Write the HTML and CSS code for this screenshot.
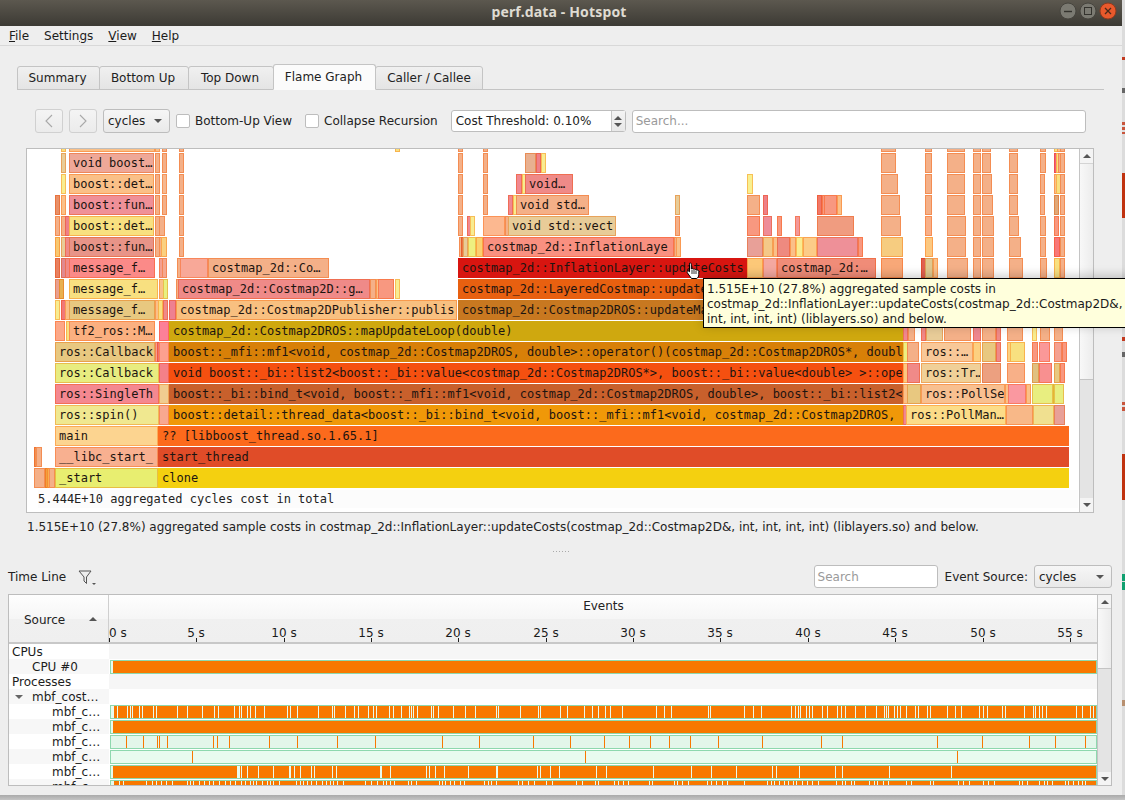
FILE: index.html
```html
<!DOCTYPE html>
<html lang="en">
<head>
<meta charset="utf-8">
<title>perf.data - Hotspot</title>
<link rel="stylesheet" href="styles.css">
</head>
<body>
<div class="top">
  <div class="window">
    <header class="titlebar">
      <span class="title">perf.data - Hotspot</span>
      <div class="winbtns">
        <svg width="60" height="18" viewBox="0 0 60 18">
          <circle cx="9" cy="9" r="8" fill="#7b7a72" stroke="#46443e"/>
          <path d="M5 9.5h8" stroke="#33322d" stroke-width="1.4"/>
          <circle cx="29" cy="9" r="8" fill="#7b7a72" stroke="#46443e"/>
          <rect x="25.5" y="5.5" width="7" height="7" fill="none" stroke="#33322d"/>
          <circle cx="49" cy="9" r="8" fill="#e9592c" stroke="#8e3a1e"/>
          <path d="M46 6l6 6M52 6l-6 6" stroke="#4a2a1a" stroke-width="1.3"/>
        </svg>
      </div>
    </header>
    <nav class="menubar">
      <span><u>F</u>ile</span>
      <span>Settin<u>g</u>s</span>
      <span><u>V</u>iew</span>
      <span><u>H</u>elp</span>
    </nav>
    <main class="content">
      <div class="tabs">
        <span class="tab">Summary</span>
        <span class="tab tab-w2">Bottom Up</span>
        <span class="tab tab-w3">Top Down</span>
        <span class="tab tab-on">Flame Graph</span>
        <span class="tab tab-w5">Caller / Callee</span>
      </div>
      <div class="toolbar">
        <button class="navbtn" aria-label="Back"><svg width="10" height="16" viewBox="0 0 10 16"><path d="M8 2L2 8l6 6" fill="none" stroke="#a8a8a8" stroke-width="1.1"/></svg></button>
        <button class="navbtn" aria-label="Forward"><svg width="10" height="16" viewBox="0 0 10 16"><path d="M2 2l6 6-6 6" fill="none" stroke="#a8a8a8" stroke-width="1.1"/></svg></button>
        <div class="combo combo-cycles"><span>cycles</span><i class="arrow-down"></i></div>
        <label class="check"><i class="box"></i>Bottom-Up View</label>
        <label class="check check-2"><i class="box"></i>Collapse Recursion</label>
        <div class="spin">
          <span class="spin-text">Cost Threshold: 0.10%</span>
          <span class="spin-btns"><i class="arrow-up"></i><i class="arrow-down"></i></span>
        </div>
        <div class="field field-grow">Search...</div>
      </div>
      <section class="flame">
        <div class="scene" id="scene">
          <div class="total">5.444E+10 aggregated cycles cost in total</div>
        </div>
        <div class="vscroll vscroll-flame">
          <span class="sb-btn"><i class="arrow-up"></i></span>
          <span class="sb-handle"></span>
          <span class="sb-track"></span>
          <span class="sb-btn"><i class="arrow-down"></i></span>
        </div>
      </section>
      <p class="status">1.515E+10 (27.8%) aggregated sample costs in costmap_2d::InflationLayer::updateCosts(costmap_2d::Costmap2D&amp;, int, int, int, int) (liblayers.so) and below.</p>
      <div class="splitter"></div>
      <div class="tl-head">
        <span class="tl-title">Time Line</span>
        <svg class="filter" width="18" height="16" viewBox="0 0 18 16"><path d="M1 1h12L8.500 7v6.500L6 11V7z" fill="none" stroke="#555" stroke-width="1"/><path d="M14 13h4l-2 2z" fill="#555"/></svg>
        <span class="spacer"></span>
        <div class="field field-search">Search</div>
        <span class="tl-label">Event Source:</span>
        <div class="combo combo-source"><span>cycles</span><i class="arrow-down"></i></div>
      </div>
      <section class="timeline">
        <div class="tl-main">
          <div class="tl-header">
            <div class="hd-source"><span>Source</span><i class="arrow-up"></i></div>
            <div class="hd-events">
              <span class="hd-title">Events</span>
              <div class="ruler" id="ruler"></div>
            </div>
          </div>
          <div class="tl-rows" id="rows"></div>
        </div>
        <div class="vscroll vscroll-tl">
          <span class="sb-btn"><i class="arrow-up"></i></span>
          <span class="sb-handle"></span>
          <span class="sb-track"></span>
          <span class="sb-btn"><i class="arrow-down"></i></span>
        </div>
      </section>
    </main>
  </div>
  <div class="desktop"></div>
</div>
<div class="shadow"></div>
<svg class="hand" width="15" height="18" viewBox="0 0 15 18"><path d="M3.500 1.200c.8-.7 1.800 0 1.800 1V7l.4-.2c.7-.3 1.400 0 1.600.4.7-.4 1.500-.2 1.800.4.7-.3 1.500 0 1.700.6l.8-.1c.7 0 1.200.6 1.200 1.300v3.400c0 1.800-1 3-2 3.700H5.500L1.500 11c-.6-.8-.5-1.600.1-1.900.6-.3 1.300 0 1.900.7V2.200z" fill="#fff" stroke="#000" stroke-width="1"/><path d="M6 8v4M8 8v4M10 8.500V12" stroke="#000" stroke-width=".8"/></svg>
<div class="tooltip">1.515E+10 (27.8%) aggregated sample costs in<br>costmap_2d::InflationLayer::updateCosts(costmap_2d::Costmap2D&amp;,<br>int, int, int, int) (liblayers.so) and below.</div>
<script src="app.js"></script>
</body>
</html>
```
FILE: styles.css
```css
* { box-sizing: border-box; }
html, body { margin: 0; height: 800px; overflow: hidden; }
body {
  position: relative;
  background: #c4c4c4;
  font: 12px/15px "DejaVu Sans", sans-serif;
  color: #222;
}
.top { display: flex; height: 795px; }
.window { width: 1122px; background: #eeeeee; display: flex; flex-direction: column; }
.desktop {
  flex: 1;
  background: linear-gradient(to bottom,
    #dcdcdc 0 57px, #c23a20 57px 60px, #dcdcdc 60px 88px, #666 88px 93px, #dcdcdc 93px 122px,
    #c8553c 122px 125px, #dcdcdc 125px 127px, #c8553c 127px 130px, #dcdcdc 130px 132px, #c8553c 132px 134px,
    #dcdcdc 134px 173px, #c0320f 173px 218px, #dcdcdc 218px 337px, #c23a20 337px 341px,
    #dcdcdc 341px 352px, #666 352px 357px, #dcdcdc 357px 402px, #c8553c 402px 405px, #dcdcdc 405px 407px,
    #c8553c 407px 411px, #dcdcdc 411px 454px, #c0320f 454px 500px, #dcdcdc 500px 574px,
    #10a070 574px 581px, #dcdcdc 581px 582px, #10a070 582px 590px, #dcdcdc 590px 700px,
    #b89070 700px 706px, #dcdcdc 706px);
}
.shadow { height: 5px; background: linear-gradient(to bottom, #aaaaaa, #c4c4c4); }

.titlebar {
  height: 26px;
  position: relative;
  flex: none;
  display: flex; align-items: center; justify-content: center;
  background: linear-gradient(to bottom, #5c584f, #3c3a34);
  padding: 0 4px 3px 0;
}
.title { font: bold 14px/20px "Noto Sans", sans-serif; letter-spacing: .15px; color: #dfdbd2; }
.winbtns { position: absolute; right: 3px; top: 2px; display: flex; }
.menubar {
  height: 20px;
  flex: none;
  display: flex;
  gap: 15px;
  padding: 2px 0 0 9px;
  border-bottom: 1px solid #d8d8d8;
  line-height: 16px;
  color: #1c1c1c;
}
.content { flex: 1; padding-left: 17px; display: flex; flex-direction: column; min-height: 0; }

.tabs {
  display: flex; align-items: flex-end;
  height: 26px; margin-top: 18px; margin-right: 18px;
  border-bottom: 1px solid #c4c4c4;
}
.tab {
  width: 83px; height: 24px; margin-bottom: -1px; padding-right: 2px;
  display: flex; align-items: center; justify-content: center;
  border: 1px solid #c4c4c4; border-radius: 3px 3px 0 0;
  background: linear-gradient(to bottom, #f0f0f0, #e4e4e4);
  margin-right: -1px;
}
.tab-w2 { width: 90px; }
.tab-w3 { width: 86px; }
.tab-on { width: 103px; height: 26px; background: #fbfbfb; border-bottom-color: #fbfbfb; z-index: 1; }
.tab-w5 { width: 108px; padding-right: 0; }

.toolbar { display: flex; align-items: center; height: 24px; margin: 19px 0 0 18px; width: 1051px; }
.navbtn {
  width: 28px; height: 24px; margin: 0 6px 0 0; padding: 0;
  display: flex; align-items: center; justify-content: center;
  border: 1px solid #d0d0d0; border-radius: 3px;
  background: linear-gradient(to bottom, #f4f4f4, #ebebeb);
}
.combo {
  display: flex; align-items: center; justify-content: space-between;
  height: 24px; padding: 0 7px 0 4px;
  border: 1px solid #bdbdbd; border-radius: 3px;
  background: linear-gradient(to bottom, #f6f6f6, #e9e9e9);
}
.combo-cycles { width: 67px; }
.arrow-down, .arrow-up { display: block; width: 0; height: 0; border-left: 4px solid transparent; border-right: 4px solid transparent; }
.arrow-down { border-top: 4px solid #555; }
.arrow-up { border-bottom: 4px solid #555; }
.check { display: flex; align-items: center; margin-left: 6px; color: #222; }
.check-2 { margin-left: 13px; }
.box { width: 14px; height: 14px; margin-right: 5px; border: 1px solid #bdbdbd; border-radius: 2px; background: #fff; }
.spin {
  width: 175px; height: 22px; margin-left: 13px;
  display: flex; align-items: center; justify-content: space-between;
  border: 1px solid #bdbdbd; border-radius: 3px; background: #fff;
  padding-left: 4px;
}
.spin-btns {
  width: 14px; height: 20px; border-left: 1px solid #c8c8c8;
  display: flex; flex-direction: column; align-items: center; justify-content: center; gap: 3px;
  background: linear-gradient(to bottom, #f4f4f4, #e8e8e8);
}
.field {
  height: 23px; padding: 0 3px;
  display: flex; align-items: center;
  border: 1px solid #bdbdbd; border-radius: 3px; background: #fff; color: #9a9a9a;
}
.field-grow { flex: 1; margin-left: 6px; }

.flame {
  display: flex;
  flex: none;
  width: 1068px; height: 365px; margin: 15px 0 0 9px;
  border: 1px solid #bdbdbd;
  background: #fff;
}
.scene { position: relative; flex: 1; overflow: hidden; background: #fff; font: 12px/18px "DejaVu Sans Mono", monospace; color: #1c1c1c; }
.block { position: absolute; height: 20px; padding-left: 3px; border: 1px solid; overflow: hidden; white-space: pre; color: #1c1410; }
.total { position: absolute; left: 11px; top: 341px; line-height: 18px; color: #222; width: 1040px; background: #fcfcfc; }

.vscroll { width: 14px; display: flex; flex-direction: column; border-left: 1px solid #c4c4c4; background: #e4e4e4; }
.sb-btn { height: 14px; flex: none; display: flex; align-items: center; justify-content: center; background: #f4f4f4; }
.sb-handle { flex: none; background: linear-gradient(to right, #f8f8f8, #ececec); border-top: 1px solid #d4d4d4; border-bottom: 1px solid #c4c4c4; }
.sb-track { flex: 1; }
.vscroll-flame .sb-handle { height: 217px; }
.vscroll-tl .sb-handle { height: 61px; }
.vscroll-tl .sb-btn { height: 13px; }

.status { margin: 7px 0 0 10px; height: 14px; line-height: 14px; white-space: nowrap; flex: none; }
.splitter {
  width: 18px; height: 1px; margin: 17px 0 0 536px; flex: none;
  background: repeating-linear-gradient(to right, #aaa 0 1px, transparent 1px 3px);
}
.tl-head { display: flex; align-items: center; height: 23px; margin: 13px 0 0 -9px; width: 1104px; flex: none; }
.tl-title { width: 70px; padding-top: 2px; }
.filter { margin-top: 2px; }
.spacer { flex: 1; }
.field-search { width: 124px; height: 23px; padding-top: 1px; }
.tl-label { margin: 0 6px 0 7px; padding-top: 1px; }
.combo-source { width: 78px; height: 23px; padding-top: 1px; }

.timeline {
  display: flex;
  flex: none;
  width: 1104px; height: 192px; margin: 6px 0 0 -9px;
  border: 1px solid #bdbdbd;
  background: #fff;
}
.tl-main { width: 1089px; display: flex; flex-direction: column; overflow: hidden; }
.tl-header { height: 49px; flex: none; display: flex; border-bottom: 2px solid #c8c8c8; background: linear-gradient(to bottom, #fefefe, #f6f6f6 50%, #f0f0f0 50%, #efefef); }
.hd-source { width: 100px; flex: none; display: flex; align-items: center; padding: 3px 11px 0 15px; justify-content: space-between; border-right: 1px solid #cfcfcf; }
.hd-source .arrow-up { margin-bottom: 3px; }
.hd-events { flex: 1; position: relative; }
.hd-title { display: block; text-align: center; padding: 4px 0 0 1px; }
.ruler { position: absolute; inset: 0; }
.tick { position: absolute; bottom: 0; width: 1px; height: 4px; background: #222; }
.tick span { position: absolute; bottom: 1px; left: -20px; width: 40px; text-align: center; color: #1a1a1a; }
.tick-first span { left: 0; text-align: left; }

.tl-rows { flex: 1; overflow: hidden; min-height: 0; }
.row { display: flex; height: 15px; flex: none; }
.row-label { width: 100px; flex: none; white-space: nowrap; background: #fff; color: #1c1c1c; padding-top: 1px; line-height: 14px; }
.row-alt .row-label { background: #f7f7f7; }
.row-0 .row-label { padding-left: 3px; }
.row-1 .row-label { padding-left: 23px; }
.row-2 .row-label { padding-left: 43px; }
.row-label .arrow-down { display: inline-block; margin: 0 9px 2px -17px; vertical-align: middle; border-top-color: #666; }
.row-empty { flex: 1; background: #f6f6f6; }
.row-blank { flex: 1; background: #fff; }
.bar { flex: 1; position: relative; margin: 1px 0 0 1px; height: 14px; border: 1px solid #8ed8ae; overflow: hidden; background: #e8faee; }
.bar-b { background: #e3f6ea; }
.bar-w { background: #e9fbef; }
.seg { position: absolute; top: 0; bottom: 0; background: #f87800; }

.tooltip {
  position: absolute; left: 703px; top: 278px; width: 430px; height: 50px;
  padding: 3px 3px;
  background: #ffffdc; border: 1px solid #000;
  box-shadow: 0 -2px 10px rgba(0,0,0,.22);
  color: #1a1a1a;
  white-space: nowrap;
}
.hand { position: absolute; left: 686px; top: 262px; }
```
FILE: app.js
```js
// Flame graph frames: [x0, x1, fill, label] per row, in page coordinates.
var P = '#f4b088', Y = '#f8e080', L = '#f8ec90', R = '#ef8a88', S = '#f89880', T = '#e8cc98', G = '#e8ee80', O = '#fac088', K = '#f4a090';
var flame = {
  '-1': [[61,63,Y],[69,155,O],[155,157,O],[162,165,P],[179,181,P],[395,399,Y],[458,460,P],[483,485,P],[881,896,P],[925,932,P],[947,965,P],[973,981,P],[982,991,P],[1009,1018,P],[1040,1046,P],[1054,1056,Y],[1057,1059,O],[1060,1062,P]],
  0: [[61,64,T],[69,154,'#eea898','void boost…'],[155,156,P],[162,165,P],[179,181,P],[458,460,P],[483,485,P],[525,536,'#e8b090'],[536,541,'#ee8088'],[541,546,L],[881,896,P],[925,932,P],[947,965,P],[973,981,P],[982,991,P],[1009,1018,P],[1040,1046,P],[1054,1056,'#f06080'],[1056,1058,Y],[1058,1060,P],[1060,1062,P]],
  1: [[61,64,L],[69,154,O,'boost::det…'],[155,156,P],[162,165,'#f6b890'],[179,181,P],[458,461,P],[483,485,P],[516,522,'#f08890'],[522,525,L],[525,573,R,'void…'],[747,753,'#f8f090'],[881,898,P],[925,932,P],[947,965,P],[973,981,P],[982,992,P],[1009,1018,P],[1040,1045,P],[1054,1056,O],[1056,1058,Y],[1060,1062,P]],
  2: [[55,57,'#e89068'],[61,64,O],[69,154,'#ef9098','boost::fun…'],[155,156,P],[162,165,P],[179,181,P],[458,460,P],[483,485,P],[508,513,'#f08890'],[513,516,L],[516,589,P,'void std…'],[675,677,T],[747,760,P],[763,766,'#ee8088'],[817,822,'#f07868'],[822,824,S],[824,837,S],[837,838,O],[881,900,P],[925,932,P],[947,965,P],[973,981,P],[982,993,P],[1009,1018,P],[1040,1045,P],[1054,1059,'#e0a878'],[1060,1062,P]],
  3: [[55,57,P],[61,63,P],[65,67,'#ee8088'],[69,154,Y,'boost::det…'],[155,156,P],[159,165,P],[179,181,P],[458,461,P],[467,470,'#f08890'],[470,472,L],[483,505,'#fcb890'],[505,508,P],[508,616,T,'void std::vect'],[675,677,P],[747,760,S],[763,772,'#ee8c98'],[777,779,S],[795,798,'#f49898'],[817,854,'#f09c80'],[881,901,P],[925,932,'#f8b088'],[947,966,P],[973,981,P],[982,994,P],[1009,1019,P],[1040,1046,P],[1054,1059,S],[1060,1062,P]],
  4: [[55,57,'#f8c870'],[61,64,T],[65,67,R],[69,154,'#e89488','boost::fun…'],[155,156,P],[159,161,P],[161,167,'#fad080'],[179,181,P],[459,461,P],[461,463,'#e87848'],[463,467,T],[468,476,'#eef080'],[476,483,'#fbd070'],[483,674,'#f99080','costmap_2d::InflationLaye'],[674,676,P],[676,678,O],[747,763,'#e8a098'],[763,773,'#f4c888'],[773,777,O],[777,790,'#ee8a80'],[790,796,O],[796,803,'#faec90'],[803,817,'#fccc88'],[817,858,'#ee9098'],[858,861,S],[881,903,'#f6cc80'],[925,933,'#fcc880'],[947,966,P],[973,981,P],[982,994,P],[1009,1021,P],[1040,1046,P],[1054,1060,'#f87878'],[1060,1062,P]],
  5: [[55,57,'#e88060'],[61,64,'#e08890'],[65,67,R],[69,155,'#fb8a88','message_f…'],[159,161,K],[162,167,'#f4a890'],[177,180,P],[180,208,'#f8a898'],[208,329,P,'costmap_2d::Co…'],[458,747,'#d81510','costmap_2d::InflationLayer::updateCosts','hot'],[747,763,'#fcc878'],[763,777,'#f4a8a0'],[777,876,'#f08c78','costmap_2d:…'],[881,903,'#f8a878'],[921,922,'#e06050'],[925,933,'#e0c890'],[933,936,O],[947,968,P],[973,981,P],[982,994,P],[1009,1023,P],[1040,1047,P],[1054,1060,Y],[1060,1062,P]],
  6: [[55,59,'#e8a090'],[59,61,'#e8b050'],[69,158,Y,'message_f…'],[159,163,O],[163,167,'#e8f080'],[176,178,P],[178,370,R,'costmap_2d::Costmap2D::g…'],[370,376,P],[376,378,O],[378,394,S],[395,399,L],[458,880,'#e86010','costmap_2d::LayeredCostmap::updateMap','hot2']],
  7: [[55,59,L],[61,65,'#f07878'],[65,67,O],[69,155,'#e8c880','message_f…'],[155,158,O],[158,162,Y],[163,167,R],[169,176,'#ee8090'],[176,457,'#f8c080','costmap_2d::Costmap2DPublisher::publis'],[458,880,'#c87820','costmap_2d::Costmap2DROS::updateMap','hot2']],
  8: [[55,65,'#fca888'],[66,69,Y],[69,155,'#fbb080','tf2_ros::M…'],[159,169,'#fc8098'],[169,903,'#cfa80f','costmap_2d::Costmap2DROS::mapUpdateLoop(double)','hot3'],[903,908,'#f08890'],[908,915,P],[921,925,'#f08888'],[926,943,T],[944,971,P],[973,981,'#ee8890'],[982,996,P],[996,999,R],[1007,1023,P],[1032,1035,L],[1040,1050,P],[1054,1063,P]],
  9: [[55,155,'#e8c880','ros::Callback'],[155,157,K],[157,159,'#f07070'],[159,169,'#fca090'],[169,903,'#d88008','boost::_mfi::mf1<void, costmap_2d::Costmap2DROS, double>::operator()(costmap_2d::Costmap2DROS*, doubl','hot3'],[903,907,'#eef080'],[907,919,P],[921,973,'#f8c898','ros::…'],[973,981,'#fcd080'],[982,996,'#e8c880'],[996,999,R],[1007,1010,'#fcd080'],[1010,1025,Y],[1032,1038,S],[1039,1050,'#fa9898'],[1054,1062,K],[1062,1064,S]],
  10: [[55,159,'#e8ec80','ros::Callback'],[159,169,'#f48088'],[169,903,'#f55010','void boost::_bi::list2<boost::_bi::value<costmap_2d::Costmap2DROS*>, boost::_bi::value<double> >::ope','hot3'],[903,907,'#fcc880'],[907,920,'#f08a88'],[921,981,'#f0d098','ros::Tr…'],[982,1001,'#eca080'],[1007,1025,'#f8b088'],[1032,1039,'#e0c080'],[1039,1052,'#f89090'],[1054,1060,'#e8c880'],[1060,1064,S]],
  11: [[55,159,'#f48890','ros::SingleTh'],[159,169,'#f0cc90'],[169,903,'#c8602c','boost::_bi::bind_t<void, boost::_mfi::mf1<void, costmap_2d::Costmap2DROS, double>, boost::_bi::list2<','hot3'],[903,907,O],[907,921,'#e8c880'],[921,1005,'#f8c090','ros::PollSe'],[1005,1008,O],[1008,1026,'#fa98a0'],[1026,1029,O],[1032,1053,G],[1053,1054,'#e0e850'],[1054,1064,G]],
  12: [[55,159,'#f0e890','ros::spin()'],[159,169,'#f8a890'],[169,903,'#f09808','boost::detail::thread_data<boost::_bi::bind_t<void, boost::_mfi::mf1<void, costmap_2d::Costmap2DROS, ','hot3'],[903,906,'#f08890'],[906,1006,'#fcdc88','ros::PollMan…'],[1006,1033,'#f8b888'],[1033,1054,'#f0e090'],[1054,1065,'#e8a098']],
  13: [[55,158,'#fcd490','main'],[158,1069,'#fc6a1c','?? [libboost_thread.so.1.65.1]','hot3']],
  14: [[34,36,'#f09050'],[36,42,P],[55,158,'#f8b090','__libc_start_'],[158,1069,'#e04c28','start_thread','hot3']],
  15: [[34,45,P],[45,47,'#f0a040'],[47,49,'#f8b050'],[49,55,P],[55,158,'#e8ee70','_start'],[158,1069,'#f4d010','clone','hot3']]
};

function edge(hex) {
  var n = parseInt(hex.slice(1), 16);
  return 'rgb(' + (n >> 16) + ',' + Math.round(((n >> 8) & 255) * 0.8) + ',' + Math.round((n & 255) * 0.6) + ')';
}

var scene = document.getElementById('scene');
Object.keys(flame).forEach(function (r) {
  flame[r].forEach(function (f) {
    var d = document.createElement('div');
    d.className = 'block';
    d.style.left = (f[0] - 27) + 'px';
    d.style.top = (153 + 21 * r - 149) + 'px';
    d.style.width = (f[1] - f[0]) + 'px';
    d.style.background = f[2];
    d.style.borderColor = f[4] ? f[2] : edge(f[2]);
    if (f[3]) d.textContent = f[3];
    scene.appendChild(d);
  });
});

// Time ruler: one tick every 5 seconds.
var ruler = document.getElementById('ruler');
for (var s = 0; s <= 55; s += 5) {
  var t = document.createElement('div');
  t.className = 'tick' + (s === 0 ? ' tick-first' : '');
  t.style.left = Math.round(s * 17.47) + 'px';
  t.innerHTML = '<span>' + s + ' s</span>';
  ruler.appendChild(t);
}

// Timeline rows.
function scale(list, base) { return list.map(function (z) { return base + z / 3; }); }

var gaps1 = [113.3, 116.7].concat(
  scale([82,90,97,118,125,160,168,232,262,307,343,355,403,418,424,441,450,466,492,562,571,591,655,697,703,736,763,775,805,820,829,868,880,904,927,933,940,952], 100),
  scale([33,39,55,100,136,166,229,235,301,355,361,421,442,493,517,535,556,571,607,709,733,754,865,871,973], 420),
  scale([40,62,152,165,173,180,197,208,215,247,260,290,303,316,345,374,408,431,437,445,462,470,481,497,525,535,560,570,622,646,664,718,730,742,787,796,851,878,884,897,906,918,1008,1027,1050,1058], 740)
);
var ticks = scale([79,130,172,178,202,340,352,388,508,592,712,826], 100).concat(
  scale([67,178,340,451,553,628,691,748,811,895], 420),
  scale([67,244,307,592,727,868,946,1036], 740)
);
var gaps5 = scale([412,414,417,423,441,475,520,568,570,582,601,632,643,695,709,841,843,871], 100).concat(
  scale([18,26,46,73,145,229,231,352,361,391,418,529,559,700,814,874,949], 420),
  scale([95,108,178,284,307,448,634], 740)
);

// The bottom row is clipped and densely sliced; a fixed sequence stands in for its samples.
var gaps6 = [], x = 113, seed = 17;
while (x < 1096) {
  seed = (seed * 137 + 59) % 251;
  gaps6.push(x);
  x += seed % 5 === 0 ? 12 + seed % 14 : 2 + seed % 5;
}

function solidSegs(gaps, from, to) {
  var segs = [], start = from;
  gaps.slice().sort(function (a, b) { return a - b; }).forEach(function (g) {
    if (g > start) segs.push([start, Math.round(g)]);
    start = Math.round(g) + 1;
  });
  if (start < to) segs.push([start, to]);
  return segs;
}
function tickSegs(xs) { return xs.map(function (v) { return [Math.round(v), Math.round(v) + 1]; }); }

var rows = [
  { label: 'CPUs', level: 0, right: 'empty' },
  { label: 'CPU #0', level: 1, segs: [[113, 1096]], alt: true },
  { label: 'Processes', level: 0, right: 'empty' },
  { label: 'mbf_cost…', level: 1, right: 'blank', alt: true, open: true },
  { label: 'mbf_c…', level: 2, segs: solidSegs(gaps1, 113, 1096) },
  { label: 'mbf_c…', level: 2, segs: [[113, 1096]], alt: true },
  { label: 'mbf_c…', level: 2, segs: tickSegs(ticks), bar: 'bar-b' },
  { label: 'mbf_c…', level: 2, segs: tickSegs([192, 585, 957]), alt: true, bar: 'bar-w' },
  { label: 'mbf_c…', level: 2, segs: solidSegs(gaps5, 113, 1096) },
  { label: 'mbf_c…', level: 2, segs: solidSegs(gaps6, 113, 1096), alt: true }
];

var host = document.getElementById('rows');
rows.forEach(function (r) {
  var row = document.createElement('div');
  row.className = 'row row-' + r.level + (r.alt ? ' row-alt' : '');
  var label = document.createElement('div');
  label.className = 'row-label';
  label.innerHTML = (r.open ? '<i class="arrow-down"></i>' : '') + r.label;
  row.appendChild(label);
  var right = document.createElement('div');
  if (r.right) {
    right.className = 'row-' + r.right;
  } else {
    right.className = 'bar ' + (r.bar || '');
    r.segs.forEach(function (s) {
      var seg = document.createElement('div');
      seg.className = 'seg';
      seg.style.left = (s[0] - 111) + 'px';
      seg.style.width = (s[1] - s[0]) + 'px';
      right.appendChild(seg);
    });
  }
  row.appendChild(right);
  host.appendChild(row);
});
```
